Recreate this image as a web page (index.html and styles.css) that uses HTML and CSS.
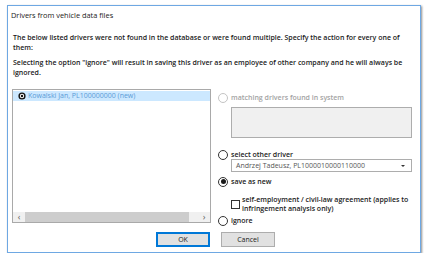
FILE: index.html
```html
<!DOCTYPE html>
<html lang="en">
<head>
  <meta charset="UTF-8">
  <title>Drivers from vehicle data files</title>
  <link rel="stylesheet" href="styles.css">
</head>
<body>
  <div class="dialog">
    <div class="title">Drivers from vehicle data files</div>
    <div class="content">
      <p class="info">The below listed drivers were not found in the database or were found multiple. Specify the action for every one of them:</p>
      <p class="info">Selecting the option "ignore" will result in saving this driver as an employee of other company and he will always be ignored.</p>
      <div class="main">
        <div class="list">
          <div class="list-items">
            <div class="row selected">
              <svg class="node" width="8" height="8" viewBox="0 0 8 8"><circle cx="4" cy="4" r="3.6" fill="#111"/><circle cx="4" cy="4" r="2.2" fill="#fff"/><circle cx="4" cy="4" r="1.2" fill="#111"/></svg>
              Kowalski Jan, PL100000000 (new)
            </div>
          </div>
          <div class="hscroll">
            <span class="arrow">&lsaquo;</span>
            <div class="track"><div class="thumb"></div></div>
            <span class="arrow">&rsaquo;</span>
          </div>
        </div>
        <div class="options">
          <label class="opt disabled"><span class="radio"></span>matching drivers found in system</label>
          <div class="matches"></div>
          <label class="opt"><span class="radio"></span>select other driver</label>
          <div class="combo">Andrzej Tadeusz, PL1000010000110000<span class="caret"></span></div>
          <label class="opt"><span class="radio checked"></span>save as new</label>
          <label class="check"><span class="box"></span><span>self-employment / civil-law agreement (applies to infringement analysis only)</span></label>
          <label class="opt"><span class="radio"></span>ignore</label>
        </div>
      </div>
      <div class="buttons">
        <button class="btn default">OK</button>
        <button class="btn">Cancel</button>
      </div>
    </div>
  </div>
</body>
</html>
```
FILE: styles.css
```css
body {
  margin: 0;
  background: #fff;
  font-family: 'Open Sans', 'Noto Sans', Arial, sans-serif;
  font-size: 7px;
  color: #1a1a1a;
}
.dialog {
  margin: 5px 0 0 7px;
  width: 412px;
  height: 246px;
  border: 1px solid #6ea8e3;
  background: #fff;
  box-shadow: 1px 1px 2px rgba(0, 0, 0, 0.45);
  display: flex;
  flex-direction: column;
}
.title {
  padding: 4px 0 0 3px;
  height: 10px;
  line-height: 10px;
  font-size: 7.4px;
}
.content {
  padding: 13px 8px 0 4px;
  display: flex;
  flex-direction: column;
}
.info {
  margin: 0 0 5px 1px;
  padding-right: 2px;
  line-height: 10px;
  font-weight: 600;
}
.main {
  margin-top: 6px;
  display: grid;
  grid-template-columns: 199px 1fr;
  gap: 7px;
  align-items: start;
}
.list {
  height: 132px;
  border: 1px solid #a9a9a9;
  display: flex;
  flex-direction: column;
}
.list-items {
  flex: 1;
  padding-top: 1px;
}
.row {
  height: 10px;
  line-height: 10px;
  display: flex;
  align-items: center;
  gap: 2px;
  padding-left: 5px;
  color: #5a9ad6;
}
.row.selected {
  background: #cce8ff;
}
.hscroll {
  height: 10px;
  background: #f0f0f0;
  display: flex;
  align-items: center;
}
.arrow {
  width: 12px;
  text-align: center;
  font-size: 9px;
  line-height: 10px;
  color: #606060;
}
.track {
  flex: 1;
  height: 10px;
}
.thumb {
  width: 164px;
  height: 10px;
  background: #cdcdcd;
}
.options {
  display: flex;
  flex-direction: column;
  padding-top: 3px;
}
.opt {
  display: flex;
  align-items: center;
  gap: 3px;
  height: 11px;
  font-weight: 600;
}
.opt.disabled {
  color: #a3a3a3;
}
.radio {
  width: 8px;
  height: 8px;
  border: 1px solid #333;
  border-radius: 50%;
  background: #fff;
  display: flex;
  align-items: center;
  justify-content: center;
}
.disabled .radio {
  border-color: #c4c4c4;
}
.radio.checked::after {
  content: '';
  width: 5px;
  height: 5px;
  border-radius: 50%;
  background: #1a1a1a;
}
.matches {
  margin: 4px 0 11px 13px;
  height: 29px;
  border: 1px solid #adadad;
  background: #f0f0f0;
}
.combo {
  margin: -1px 0 4px 13px;
  height: 11px;
  border: 1px solid #adadad;
  background: #fff;
  color: #555;
  display: flex;
  align-items: center;
  justify-content: space-between;
  padding: 0 6px 0 4px;
}
.caret {
  width: 0;
  height: 0;
  border-left: 2px solid transparent;
  border-right: 2px solid transparent;
  border-top: 2px solid #333;
}
.check {
  margin: 8px 0 2px 13px;
  display: flex;
  align-items: center;
  gap: 2px;
  line-height: 9px;
  font-weight: 600;
}
.box {
  flex: none;
  width: 7px;
  height: 7px;
  border: 1px solid #333;
  background: #fff;
}
.buttons {
  margin-top: 6px;
  display: flex;
  justify-content: center;
  gap: 11px;
  padding-left: 7px;
}
.btn {
  width: 54px;
  height: 15px;
  border: 1px solid #adadad;
  background: #e1e1e1;
  font-family: inherit;
  font-size: 7px;
  color: #1a1a1a;
  padding: 0;
}
.btn.default {
  border: 2px solid #0078d7;
}
```
